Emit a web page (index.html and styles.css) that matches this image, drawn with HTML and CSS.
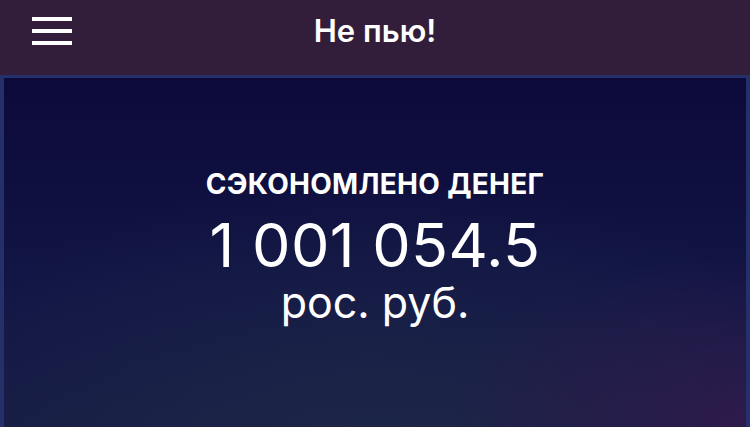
FILE: index.html
```html
<!DOCTYPE html>
<html lang="ru">
<head>
    <meta charset="UTF-8">
    <meta name="viewport" content="width=device-width, initial-scale=1.0">
    <title>Не пью!</title>
    <link rel="stylesheet" href="styles.css">
</head>
<body>

<header class="topbar">
    <button class="menu-btn" aria-label="Меню">
        <span></span>
        <span></span>
        <span></span>
    </button>
    <h1 class="title">Не пью!</h1>
</header>

<main class="card">
    <p class="label">СЭКОНОМЛЕНО ДЕНЕГ</p>
    <p class="amount">1 001 054.5</p>
    <p class="currency">рос. руб.</p>
</main>

</body>
</html>
```

FILE: styles.css
```css
html, body {
    height: 100%;
}

body {
    margin: 0;
    display: flex;
    flex-direction: column;
    background: #252f6a;
    font-family: Inter, "Liberation Sans", Arial, sans-serif;
    color: #ffffff;
    overflow: hidden;
}

.topbar {
    position: relative;
    height: 75px;
    flex-shrink: 0;
    display: flex;
    align-items: center;
    justify-content: center;
    background: #321e3a;
}

.menu-btn {
    position: absolute;
    left: 32px;
    top: 17px;
    width: 40px;
    padding: 0;
    border: none;
    background: none;
    display: flex;
    flex-direction: column;
    gap: 8px;
    cursor: pointer;
}

.menu-btn span {
    display: block;
    height: 4px;
    background: #ffffff;
}

.title {
    margin: 0;
    font-size: 31px;
    font-weight: 600;
    padding-bottom: 14px;
}

.card {
    flex: 1;
    margin: 3px 4px 0;
    padding-top: 90px;
    display: flex;
    flex-direction: column;
    align-items: center;
    text-align: center;
    background:
        radial-gradient(ellipse 60% 70% at 100% 100%, rgba(48, 26, 76, 0.9), rgba(48, 26, 76, 0) 70%),
        radial-gradient(ellipse 70% 80% at 50% 110%, #1d2748 0%, rgba(29, 39, 72, 0) 100%),
        linear-gradient(180deg, #0c0a3a 0%, #121545 60%, #161b45 100%);
}

.label {
    margin: 0;
    font-size: 28px;
    font-weight: 700;
    line-height: 32px;
    letter-spacing: 0.3px;
}

.amount {
    margin: 11px 0 0;
    font-size: 61px;
    font-weight: 400;
    line-height: 69px;
    letter-spacing: 0.3px;
}

.currency {
    margin: 0;
    font-size: 43px;
    font-weight: 400;
    line-height: 44px;
}
```
